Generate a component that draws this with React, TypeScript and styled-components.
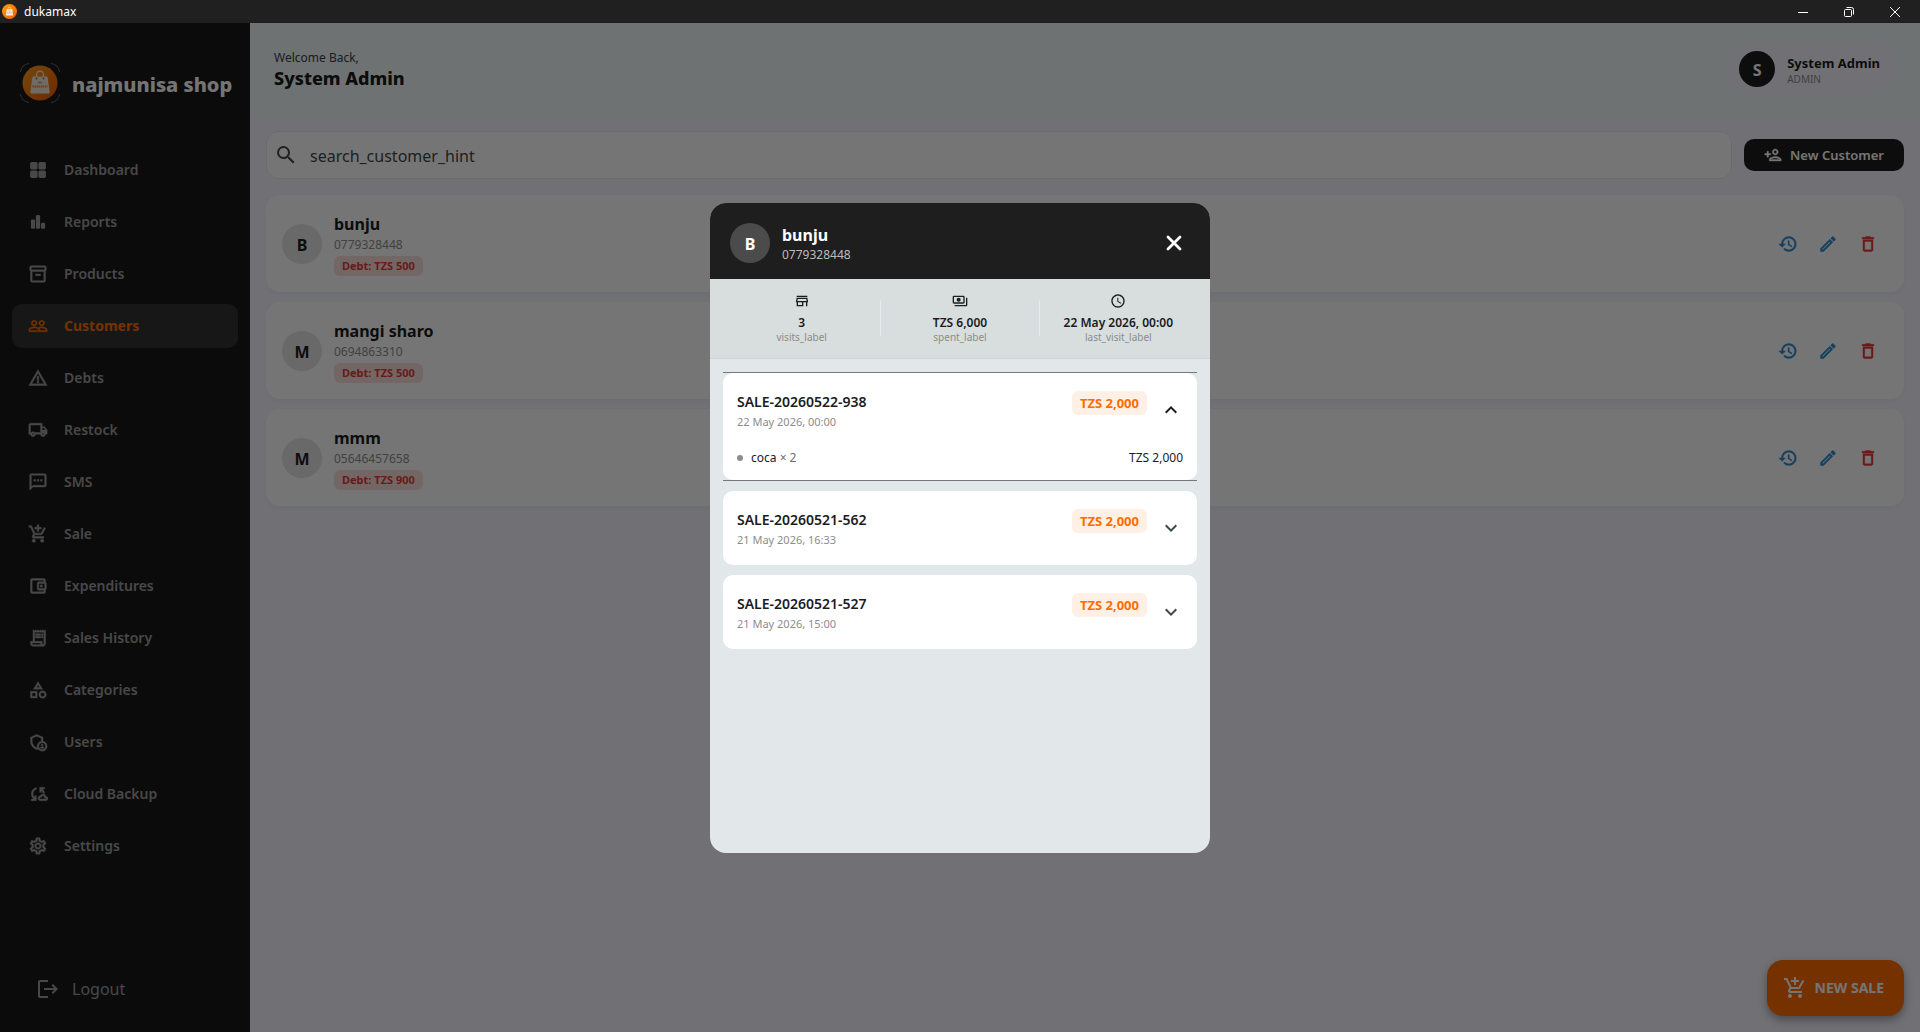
import React, { useState } from "react";
import styled, { createGlobalStyle, css } from "styled-components";
import type { IconType } from "react-icons";
import {
  MdOutlineInventory2,
  MdPeopleOutline,
  MdWarningAmber,
  MdOutlineLocalShipping,
  MdOutlineTextsms,
  MdAddShoppingCart,
  MdOutlineAccountBalanceWallet,
  MdOutlineReceiptLong,
  MdOutlineCategory,
  MdOutlineAdminPanelSettings,
  MdOutlineCloudSync,
  MdOutlineSettings,
  MdLogout,
  MdSearch,
  MdOutlinePersonAdd,
  MdHistory,
  MdOutlineEdit,
  MdDeleteOutline,
  MdOutlineStore,
  MdOutlinePayments,
  MdAccessTime,
  MdExpandMore,
} from "react-icons/md";

const GlobalStyle = createGlobalStyle`
  *, *::before, *::after { box-sizing: border-box; }
  body {
    margin: 0;
    font-family: "Segoe UI", "Noto Sans", "Open Sans", sans-serif;
    color: #1c1c1e;
  }
  button, input { font-family: inherit; color: inherit; }
  button { border: 0; padding: 0; background: none; cursor: pointer; text-align: left; }
  h1, h2, p, ul, dl, dd, dt { margin: 0; padding: 0; }
  ul { list-style: none; }
  svg { display: block; flex: none; }
`;

/* Thickens the glyph of a filled icon, leaving its empty bounding path alone. */
const heavierIcon = css`
  svg { stroke-width: 0.5px; }
  svg path[fill="none"] { stroke: none; }
`;

const Window = styled.div`
  display: flex;
  flex-direction: column;
  height: 100vh;
  background: #f4f5fe;
`;

const TitleBar = styled.header`
  display: flex;
  align-items: center;
  flex: none;
  height: 23px;
  padding: 0 2px;
  background: #202020;
  color: #fff;
`;

const TitleText = styled.span`
  flex: 1;
  margin-left: 7px;
  font-size: 12px;
  line-height: 16px;
`;

const WindowButton = styled.button`
  display: flex;
  align-items: center;
  justify-content: center;
  width: 46px;
  height: 20px;
`;

const Body = styled.div`
  position: relative;
  display: flex;
  flex: 1;
  min-height: 0;
`;

const Sidebar = styled.aside`
  display: flex;
  flex-direction: column;
  flex: none;
  width: 250px;
  background: #1a1a1a;
  color: #fff;
`;

const Brand = styled.div`
  display: flex;
  align-items: center;
  gap: 12px;
  padding: 40px 20px 41px;
  font-size: 20px;
  font-weight: 800;
  line-height: 36px;
  white-space: nowrap;
`;

const BrandName = styled.span`
  padding-top: 4px;
`;

const Nav = styled.nav`
  display: flex;
  flex: 1;
  flex-direction: column;
  gap: 8px;
  padding: 4px 12px;
`;

const NavItem = styled.a<{ $active?: boolean }>`
  display: flex;
  align-items: center;
  gap: 16px;
  height: 44px;
  padding: 0 16px;
  border-radius: 10px;
  font-size: 14px;
  font-weight: 600;
  line-height: 20px;
  text-decoration: none;
  color: #9e9e9e;
  ${heavierIcon}
  ${(p) =>
    p.$active &&
    css`
      background: #323232;
      color: #ff6d00;
      font-weight: 700;
    `}
`;

const Logout = styled.button`
  display: flex;
  align-items: center;
  gap: 12px;
  height: 56px;
  margin-bottom: 15px;
  padding: 0 36px;
  font-size: 16px;
  line-height: 24px;
  color: #9e9e9e;
`;

const Main = styled.main`
  position: relative;
  display: flex;
  flex: 1;
  flex-direction: column;
  min-width: 0;
`;

const TopBar = styled.header`
  display: flex;
  align-items: center;
  justify-content: space-between;
  height: 92px;
  padding: 0 24px;
  background: #f0f9fa;
`;

const Welcome = styled.p`
  padding-top: 2px;
  font-size: 12px;
  line-height: 16px;
  color: #3c4043;
`;

const UserTitle = styled.h1`
  font-size: 18px;
  font-weight: 800;
  line-height: 24px;
`;

const Profile = styled.div`
  display: flex;
  align-items: center;
  gap: 12px;
  padding: 8px 16px 8px 12px;
  border-radius: 26px;
  background: #f4f5fe;
`;

const ProfileName = styled.p`
  padding-top: 2px;
  font-size: 13px;
  font-weight: 700;
  line-height: 18px;
`;

const ProfileRole = styled.p`
  font-size: 10px;
  line-height: 14px;
  color: #8e8e8e;
`;

const Avatar = styled.div<{ $size: number; $bg: string; $fg: string }>`
  display: flex;
  align-items: center;
  justify-content: center;
  flex: none;
  width: ${(p) => p.$size}px;
  height: ${(p) => p.$size}px;
  padding-top: 2px;
  border-radius: 50%;
  background: ${(p) => p.$bg};
  color: ${(p) => p.$fg};
  font-size: 16px;
  font-weight: 700;
  line-height: 24px;
`;

const Content = styled.section`
  display: flex;
  flex-direction: column;
  gap: 16px;
  padding: 16px;
`;

const Toolbar = styled.div`
  display: flex;
  align-items: center;
  gap: 12px;
`;

const SearchBox = styled.label`
  display: flex;
  align-items: center;
  flex: 1;
  gap: 12px;
  height: 48px;
  padding: 0 7px;
  border: 1px solid #e8eaf0;
  border-radius: 12px;
  background: #fff;
  color: #3f484a;
`;

const SearchInput = styled.input`
  flex: 1;
  padding: 2px 0 0;
  border: 0;
  outline: 0;
  background: transparent;
  font-size: 16px;
  line-height: 24px;
  &::placeholder { color: #3f484a; opacity: 1; }
`;

const PrimaryButton = styled.button`
  display: flex;
  align-items: center;
  justify-content: center;
  gap: 8px;
  width: 160px;
  height: 32px;
  border-radius: 10px;
  background: #1e1e1e;
  color: #fff;
  font-size: 13px;
  font-weight: 600;
  line-height: 20px;
  ${heavierIcon}
`;

const CustomerList = styled.ul`
  display: flex;
  flex-direction: column;
  gap: 10px;
`;

const CustomerCard = styled.li`
  display: flex;
  align-items: center;
  gap: 12px;
  padding: 16px;
  border-radius: 14px;
  background: #fff;
  box-shadow: 0 2px 4px rgba(0, 0, 0, 0.03);
`;

const CustomerInfo = styled.div`
  display: flex;
  flex: 1;
  flex-direction: column;
  align-items: flex-start;
`;

const CustomerName = styled.h2`
  padding-top: 1px;
  font-size: 16px;
  font-weight: 700;
  line-height: 24px;
`;

const CustomerPhone = styled.p`
  margin-bottom: 3px;
  font-size: 12px;
  line-height: 17px;
  color: #8e8e8e;
`;

const DebtBadge = styled.span`
  padding: 0 8px;
  border-radius: 6px;
  background: #fbe1df;
  color: #e53935;
  font-size: 11px;
  font-weight: 700;
  line-height: 20px;
`;

const IconButton = styled.button<{ $color: string }>`
  display: flex;
  align-items: center;
  justify-content: center;
  width: 40px;
  height: 40px;
  color: ${(p) => p.$color};
`;

const Actions = styled.div`
  display: flex;
  ${heavierIcon}
`;

const NewSale = styled.button`
  position: absolute;
  right: 16px;
  bottom: 16px;
  display: flex;
  align-items: center;
  gap: 8px;
  height: 56px;
  padding: 0 20px 0 16px;
  border-radius: 16px;
  background: #ff6d00;
  box-shadow: 0 4px 8px rgba(0, 0, 0, 0.35);
  color: #fff;
  font-size: 14px;
  font-weight: 700;
  line-height: 20px;
`;

const Scrim = styled.div`
  position: absolute;
  inset: 0;
  display: flex;
  align-items: center;
  justify-content: center;
  background: rgba(0, 0, 0, 0.54);
`;

const Dialog = styled.div`
  display: flex;
  flex-direction: column;
  width: 100%;
  max-width: 500px;
  height: 100%;
  max-height: 650px;
  border-radius: 16px;
  background: #e2e8ea;
  overflow: hidden;
`;

const DialogHeader = styled.div`
  display: flex;
  align-items: center;
  gap: 12px;
  padding: 20px 16px 16px 20px;
  background: #1e1e1e;
  color: #fff;
`;

const DialogHeading = styled.div`
  flex: 1;
`;

const DialogName = styled.h2`
  font-size: 16px;
  font-weight: 700;
  line-height: 24px;
`;

const DialogPhone = styled.p`
  font-size: 12px;
  line-height: 16px;
  color: #bcbcbc;
`;

const Stats = styled.dl`
  display: flex;
  align-items: center;
  height: 80px;
  padding: 0 13px;
  border-bottom: 1px solid #cdd4d5;
  background: #d8dddd;
`;

const Stat = styled.div`
  display: flex;
  flex: 1;
  flex-direction: column;
  align-items: center;
`;

const StatValue = styled.dd`
  margin-top: 5px;
  font-size: 12px;
  font-weight: 600;
  line-height: 17px;
`;

const StatLabel = styled.dt`
  order: 1;
  font-size: 10px;
  line-height: 12px;
  color: #8a8c8c;
`;

const StatDivider = styled.div`
  width: 1px;
  height: 36px;
  background: #e6eaec;
`;

const Sales = styled.ul`
  display: flex;
  flex: 1;
  flex-direction: column;
  gap: 10px;
  padding: 13px;
  overflow: auto;
`;

const SaleItem = styled.li<{ $open: boolean }>`
  flex: none;
  ${(p) =>
    p.$open &&
    css`
      border-top: 1px solid #737b7e;
      border-bottom: 1px solid #737b7e;
    `}
`;

const SaleCard = styled.div`
  border-radius: 10px;
  background: #fff;
`;

const SaleToggle = styled.button`
  display: flex;
  align-items: center;
  gap: 12px;
  width: 100%;
  height: 74px;
  padding: 0 14px;
`;

const SaleText = styled.span`
  display: flex;
  flex: 1;
  flex-direction: column;
  padding-top: 2px;
`;

const SaleCode = styled.span`
  font-size: 14px;
  font-weight: 600;
  line-height: 22px;
`;

const SaleDate = styled.span`
  font-size: 11px;
  line-height: 18px;
  color: #8c8c8c;
`;

const Amount = styled.span`
  align-self: flex-start;
  margin-top: 18px;
  padding: 0 8px;
  border-radius: 6px;
  background: #fff0e5;
  color: #ff6d00;
  font-size: 13px;
  font-weight: 700;
  line-height: 24px;
`;

const Chevron = styled(MdExpandMore)<{ $open: boolean }>`
  color: ${(p) => (p.$open ? "#1c1c1e" : "#3f484a")};
  transform: rotate(${(p) => (p.$open ? 180 : 0)}deg);
`;

const LineItem = styled.div`
  display: flex;
  align-items: center;
  gap: 8px;
  padding: 1px 14px 12px;
  font-size: 12px;
  line-height: 20px;
`;

const Dot = styled.span`
  width: 6px;
  height: 6px;
  border-radius: 50%;
  background: #8c8c8c;
`;

const LineName = styled.span`
  flex: 1;
`;

const Quantity = styled.span`
  color: #6a6e70;
`;

function BrandMark({ size, framed }: { size: number; framed?: boolean }) {
  return (
    <svg width={size} height={size} viewBox="0 0 40 40" aria-hidden="true">
      <defs>
        <linearGradient id={`mark${size}`} x1="0" y1="0" x2="1" y2="1">
          <stop offset="0" stopColor="#ffa01a" />
          <stop offset="1" stopColor="#f05a00" />
        </linearGradient>
      </defs>
      {framed && (
        <path
          d="M.5 9Q1.500 1.500 9 .5M31 .5Q38.500 1.500 39.500 9M39.500 31Q38.500 38.500 31 39.500M9 39.500Q1.500 38.500 .5 31"
          fill="none"
          stroke="#6a6a6a"
        />
      )}
      <circle cx="20" cy="20" r={framed ? 17.5 : 20} fill={`url(#mark${size})`} />
      <path d="M16.500 15v-3a3.500 4 0 0 1 7 0v3" fill="none" stroke="#f5e9dc" strokeWidth="1.500" />
      <path d="M12.500 13.500h15l2.200 15.500q.2 1.500-1.200 1.500H11.500q-1.400 0-1.200-1.500z" fill="#f5e9dc" />
      <path d="M12.500 23.500h15" stroke="#f08a3c" strokeWidth="2" strokeDasharray="1.500 .5" />
      <path d="M18 19.500h4" stroke="#f08a3c" strokeWidth="1.500" />
      <circle cx="16.500" cy="15.500" r="0.900" fill="#c05a1c" />
      <circle cx="23.500" cy="15.500" r="0.900" fill="#c05a1c" />
    </svg>
  );
}

function GridIcon({ size = 20 }: { size?: number | string }) {
  return (
    <svg width={size} height={size} viewBox="0 0 24 24" fill="currentColor" aria-hidden="true">
      <rect x="2.500" y="2.500" width="9" height="9" rx="2" />
      <rect x="12.500" y="2.500" width="9" height="9" rx="2" />
      <rect x="2.500" y="12.500" width="9" height="9" rx="2" />
      <rect x="12.500" y="12.500" width="9" height="9" rx="2" />
    </svg>
  );
}

function BarsIcon({ size = 20 }: { size?: number | string }) {
  return (
    <svg width={size} height={size} viewBox="0 0 24 24" fill="currentColor" aria-hidden="true">
      <rect x="3.500" y="9" width="5" height="11" rx="1.500" />
      <rect x="9.500" y="3.500" width="5" height="16.500" rx="1.500" />
      <rect x="15.500" y="13" width="5" height="7" rx="1.500" />
    </svg>
  );
}

function CloseIcon() {
  return (
    <svg width="24" height="24" viewBox="0 0 24 24" fill="none" stroke="currentColor" strokeWidth="2.800" strokeLinecap="round" aria-hidden="true">
      <path d="M6 6l12 12M18 6L6 18" />
    </svg>
  );
}

type NavEntry = { label: string; icon: IconType | typeof GridIcon };

const navEntries: NavEntry[] = [
  { label: "Dashboard", icon: GridIcon },
  { label: "Reports", icon: BarsIcon },
  { label: "Products", icon: MdOutlineInventory2 },
  { label: "Customers", icon: MdPeopleOutline },
  { label: "Debts", icon: MdWarningAmber },
  { label: "Restock", icon: MdOutlineLocalShipping },
  { label: "SMS", icon: MdOutlineTextsms },
  { label: "Sale", icon: MdAddShoppingCart },
  { label: "Expenditures", icon: MdOutlineAccountBalanceWallet },
  { label: "Sales History", icon: MdOutlineReceiptLong },
  { label: "Categories", icon: MdOutlineCategory },
  { label: "Users", icon: MdOutlineAdminPanelSettings },
  { label: "Cloud Backup", icon: MdOutlineCloudSync },
  { label: "Settings", icon: MdOutlineSettings },
];

const customers = [
  { name: "bunju", phone: "0779328448", debt: "TZS 500" },
  { name: "mangi sharo", phone: "0694863310", debt: "TZS 500" },
  { name: "mmm", phone: "05646457658", debt: "TZS 900" },
];

const sales = [
  { code: "SALE-20260522-938", date: "22 May 2026, 00:00", total: "TZS 2,000" },
  { code: "SALE-20260521-562", date: "21 May 2026, 16:33", total: "TZS 2,000" },
  { code: "SALE-20260521-527", date: "21 May 2026, 15:00", total: "TZS 2,000" },
];

const stats = [
  { icon: MdOutlineStore, value: "3", label: "visits_label" },
  { icon: MdOutlinePayments, value: "TZS 6,000", label: "spent_label" },
  { icon: MdAccessTime, value: "22 May 2026, 00:00", label: "last_visit_label" },
];

export default function App() {
  const [openSale, setOpenSale] = useState<string | null>(sales[0].code);
  const [dialogOpen, setDialogOpen] = useState(true);

  return (
    <Window>
      <GlobalStyle />
      <TitleBar>
        <BrandMark size={15} />
        <TitleText>dukamax</TitleText>
        <WindowButton aria-label="Minimize">
          <svg width="10" height="10" viewBox="0 0 10 10" stroke="#fff">
            <path d="M0 5.500h10" />
          </svg>
        </WindowButton>
        <WindowButton aria-label="Restore">
          <svg width="10" height="10" viewBox="0 0 10 10" stroke="#fff" fill="none">
            <rect x="0.500" y="2.500" width="7" height="7" rx="1" />
            <path d="M2.500 .5h5a2 2 0 0 1 2 2v5" />
          </svg>
        </WindowButton>
        <WindowButton aria-label="Close window">
          <svg width="10" height="10" viewBox="0 0 10 10" stroke="#fff">
            <path d="M0 0l10 10M10 0L0 10" />
          </svg>
        </WindowButton>
      </TitleBar>

      <Body>
        <Sidebar>
          <Brand>
            <BrandMark size={40} framed />
            <BrandName>najmunisa shop</BrandName>
          </Brand>
          <Nav>
            {navEntries.map(({ label, icon: Icon }) => (
              <NavItem key={label} href="#" $active={label === "Customers"}>
                <Icon size={20} />
                {label}
              </NavItem>
            ))}
          </Nav>
          <Logout>
            <MdLogout size={24} />
            Logout
          </Logout>
        </Sidebar>

        <Main>
          <TopBar>
            <div>
              <Welcome>Welcome Back,</Welcome>
              <UserTitle>System Admin</UserTitle>
            </div>
            <Profile>
              <Avatar $size={36} $bg="#1e1e1e" $fg="#fff">S</Avatar>
              <div>
                <ProfileName>System Admin</ProfileName>
                <ProfileRole>ADMIN</ProfileRole>
              </div>
            </Profile>
          </TopBar>

          <Content>
            <Toolbar>
              <SearchBox>
                <MdSearch size={24} />
                <SearchInput aria-label="Search customers" placeholder="search_customer_hint" />
              </SearchBox>
              <PrimaryButton>
                <MdOutlinePersonAdd size={18} />
                New Customer
              </PrimaryButton>
            </Toolbar>
            <CustomerList>
              {customers.map((c) => (
                <CustomerCard key={c.phone}>
                  <Avatar $size={40} $bg="#e4e4e4" $fg="#1e1e1e">{c.name[0].toUpperCase()}</Avatar>
                  <CustomerInfo>
                    <CustomerName>{c.name}</CustomerName>
                    <CustomerPhone>{c.phone}</CustomerPhone>
                    <DebtBadge>Debt: {c.debt}</DebtBadge>
                  </CustomerInfo>
                  <Actions>
                    <IconButton $color="#2a8bd0" aria-label="History" onClick={() => setDialogOpen(true)}>
                      <MdHistory size={20} />
                    </IconButton>
                    <IconButton $color="#2a8bd0" aria-label="Edit">
                      <MdOutlineEdit size={20} />
                    </IconButton>
                    <IconButton $color="#e53935" aria-label="Delete">
                      <MdDeleteOutline size={20} />
                    </IconButton>
                  </Actions>
                </CustomerCard>
              ))}
            </CustomerList>
          </Content>

          <NewSale>
            <MdAddShoppingCart size={24} />
            NEW SALE
          </NewSale>
        </Main>

        {dialogOpen && (
          <Scrim>
            <Dialog role="dialog" aria-label="bunju">
              <DialogHeader>
                <Avatar $size={40} $bg="#4b4b4b" $fg="#fff">B</Avatar>
                <DialogHeading>
                  <DialogName>bunju</DialogName>
                  <DialogPhone>0779328448</DialogPhone>
                </DialogHeading>
                <IconButton $color="#fff" aria-label="Close" onClick={() => setDialogOpen(false)}>
                  <CloseIcon />
                </IconButton>
              </DialogHeader>
              <Stats>
                {stats.map(({ icon: Icon, value, label }, i) => (
                  <React.Fragment key={label}>
                    {i > 0 && <StatDivider />}
                    <Stat>
                      <Icon size={16} />
                      <StatLabel>{label}</StatLabel>
                      <StatValue>{value}</StatValue>
                    </Stat>
                  </React.Fragment>
                ))}
              </Stats>
              <Sales>
                {sales.map((s) => {
                  const open = s.code === openSale;
                  return (
                    <SaleItem key={s.code} $open={open}>
                      <SaleCard>
                        <SaleToggle aria-expanded={open} onClick={() => setOpenSale(open ? null : s.code)}>
                          <SaleText>
                            <SaleCode>{s.code}</SaleCode>
                            <SaleDate>{s.date}</SaleDate>
                          </SaleText>
                          <Amount>{s.total}</Amount>
                          <Chevron size={24} $open={open} />
                        </SaleToggle>
                        {open && (
                          <LineItem>
                            <Dot />
                            <LineName>
                              coca <Quantity>× 2</Quantity>
                            </LineName>
                            <span>{s.total}</span>
                          </LineItem>
                        )}
                      </SaleCard>
                    </SaleItem>
                  );
                })}
              </Sales>
            </Dialog>
          </Scrim>
        )}
      </Body>
    </Window>
  );
}
